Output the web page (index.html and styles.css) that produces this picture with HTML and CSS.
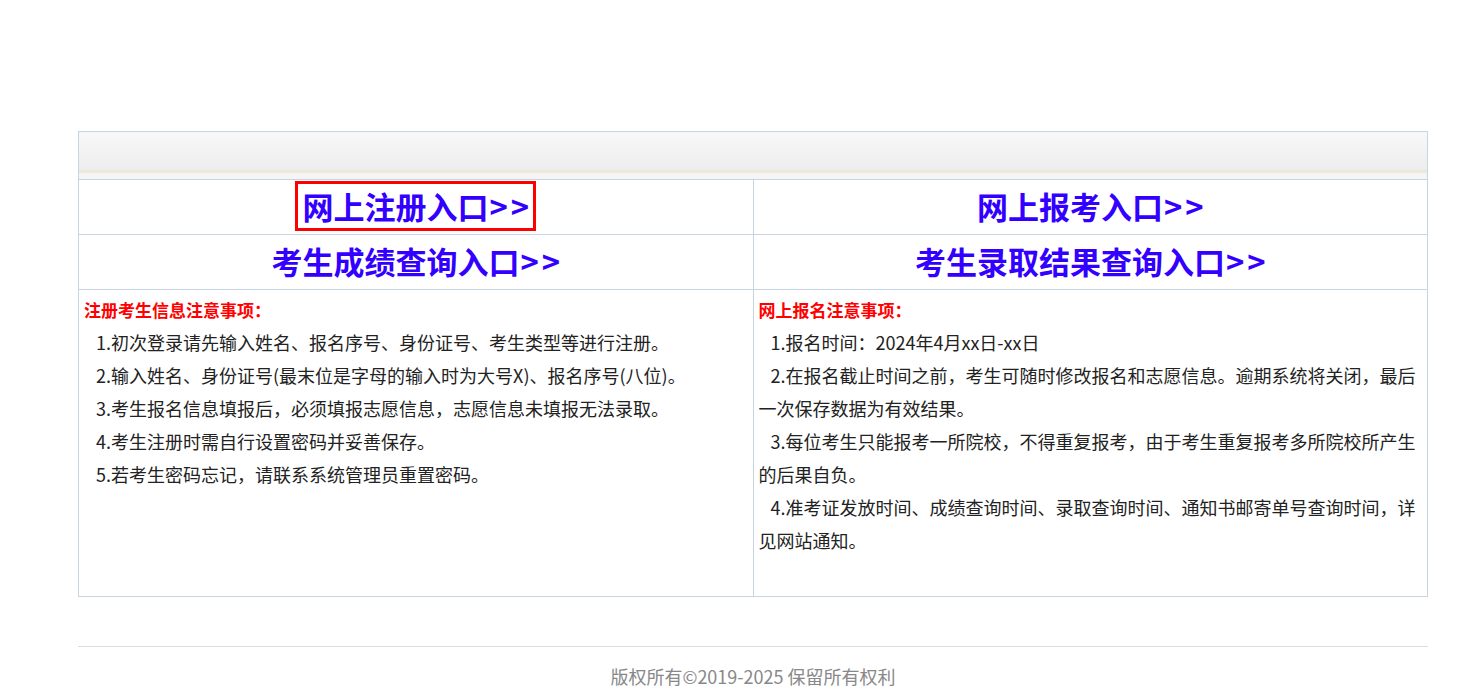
FILE: index.html
```html
<!DOCTYPE html>
<html lang="zh-CN">
<head>
<meta charset="utf-8">
<title>网上报名</title>
<link rel="stylesheet" href="styles.css">
</head>
<body>
<div class="page">
  <table class="entry">
    <tr><td class="head" colspan="2"></td></tr>
    <tr>
      <td class="link-cell"><a class="big-link boxed" href="#">网上注册入口<span class="arrows">&gt;&gt;</span></a></td>
      <td class="link-cell"><a class="big-link" href="#">网上报考入口<span class="arrows">&gt;&gt;</span></a></td>
    </tr>
    <tr>
      <td class="link-cell"><a class="big-link" href="#">考生成绩查询入口<span class="arrows">&gt;&gt;</span></a></td>
      <td class="link-cell"><a class="big-link" href="#">考生录取结果查询入口<span class="arrows">&gt;&gt;</span></a></td>
    </tr>
    <tr>
      <td class="notes">
        <div class="notes-title">注册考生信息注意事项：</div>
        <p>1.初次登录请先输入姓名、报名序号、身份证号、考生类型等进行注册。</p>
        <p>2.输入姓名、身份证号(最末位是字母的输入时为大号X)、报名序号(八位)。</p>
        <p>3.考生报名信息填报后，必须填报志愿信息，志愿信息未填报无法录取。</p>
        <p>4.考生注册时需自行设置密码并妥善保存。</p>
        <p>5.若考生密码忘记，请联系系统管理员重置密码。</p>
      </td>
      <td class="notes">
        <div class="notes-title">网上报名注意事项：</div>
        <p>1.报名时间：2024年4月xx日-xx日</p>
        <p>2.在报名截止时间之前，考生可随时修改报名和志愿信息。逾期系统将关闭，最后一次保存数据为有效结果。</p>
        <p>3.每位考生只能报考一所院校，不得重复报考，由于考生重复报考多所院校所产生的后果自负。</p>
        <p>4.准考证发放时间、成绩查询时间、录取查询时间、通知书邮寄单号查询时间，详见网站通知。</p>
      </td>
    </tr>
  </table>
  <div class="footer">版权所有©2019-2025 保留所有权利</div>
</div>
</body>
</html>
```

FILE: styles.css
```css
html, body {
  margin: 0;
  padding: 0;
  background: #ffffff;
}
body {
  font-family: "Noto Sans CJK SC", "Noto Sans", sans-serif;
  color: #222222;
}
.page {
  width: 1350px;
  margin-left: 78px;
  padding-top: 131px;
}
.entry {
  width: 1350px;
  border-collapse: collapse;
  table-layout: fixed;
}
.entry td {
  border: 1px solid #c6d5e1;
  padding: 0;
}
.head {
  height: 47px;
  background: linear-gradient(to bottom,
    #f8f8f8 0px,
    #ededed 37px,
    #ebe7d8 38px,
    #ebe7d8 40px,
    #f5f5f5 41px,
    #f5f5f5 47px);
}
.link-cell {
  height: 54px;
  text-align: center;
  vertical-align: middle;
}
.big-link {
  display: inline-block;
  white-space: nowrap;
  font-size: 31px;
  font-weight: bold;
  line-height: 44px;
  color: #3300ff;
  text-decoration: none;
  border: 3px solid transparent;
  padding: 0 1px 0 4px;
  position: relative;
  top: -1px;
}
.big-link.boxed {
  border-color: #ff0000;
}
.arrows {
  letter-spacing: 3px;
  margin-left: 1px;
}
.notes {
  height: 303px;
  vertical-align: top;
  padding: 3px 8px 0 5px !important;
}
.notes-title {
  font-size: 17px;
  font-weight: bold;
  color: #ff0000;
  line-height: 33px;
}
.notes p {
  margin: 0;
  font-size: 18px;
  line-height: 33px;
  text-indent: 12px;
}
.footer {
  margin-top: 49px;
  border-top: 1px solid #dddddd;
  padding-top: 15px;
  text-align: center;
  font-size: 18px;
  line-height: 28px;
  color: #888888;
}
```
